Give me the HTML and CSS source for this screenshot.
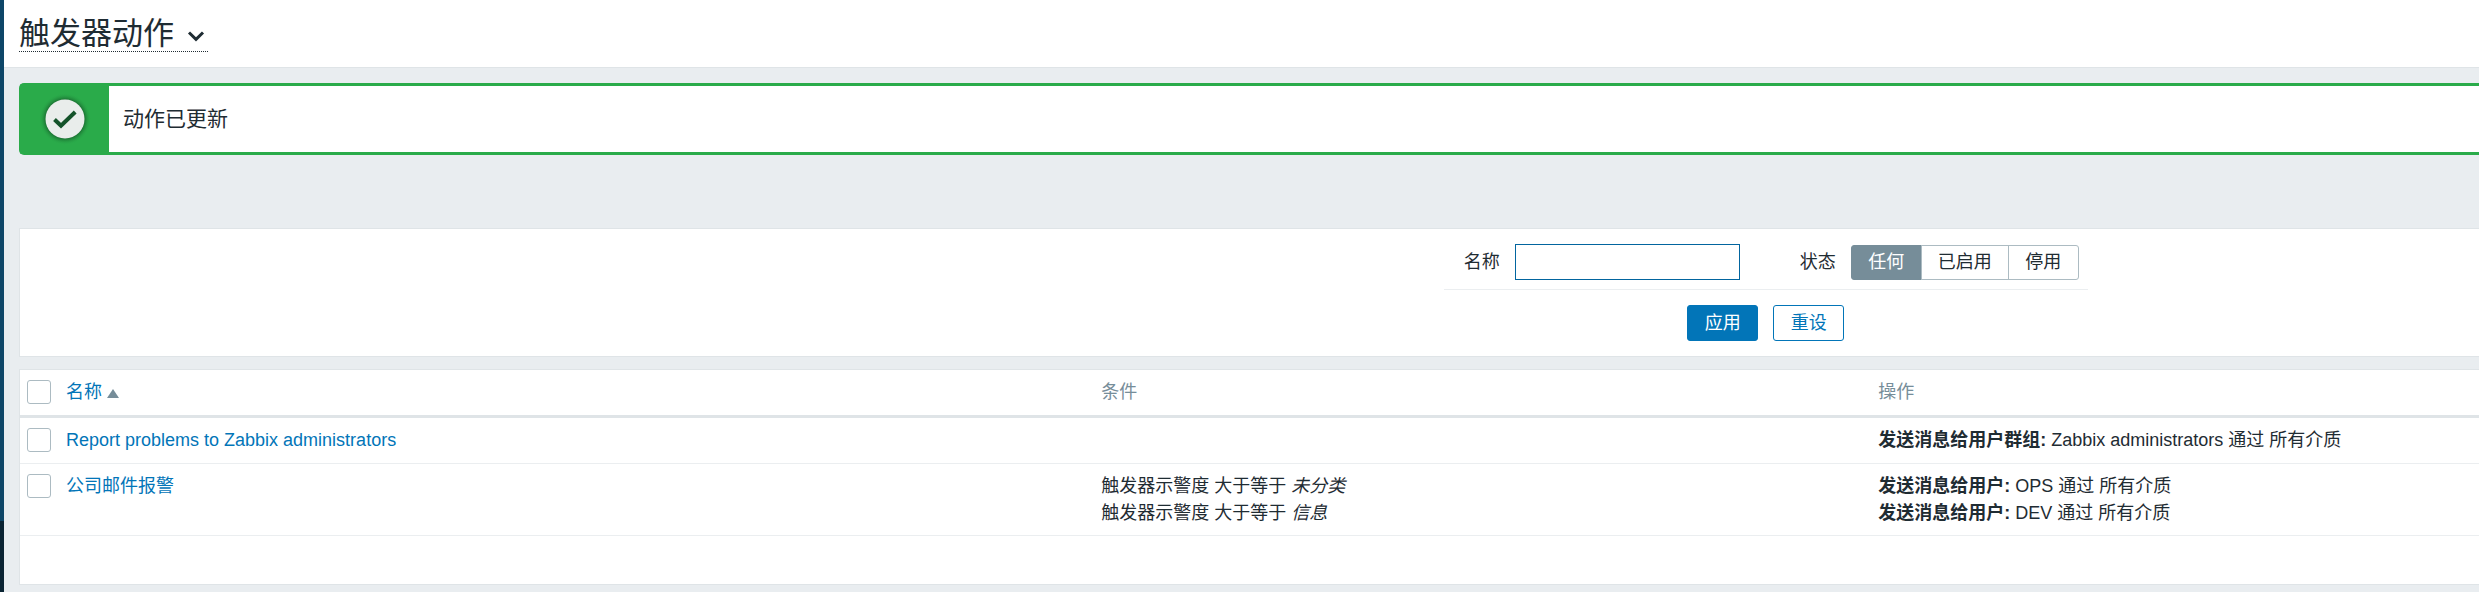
FILE: index.html
```html
<!DOCTYPE html>
<html lang="zh-CN">
<head>
<meta charset="utf-8">
<title>触发器动作</title>
<link rel="stylesheet" href="styles.css">
</head>
<body>
<div class="layout">
  <aside class="sidebar"><div class="sidebar-menu"></div><div class="sidebar-footer"></div></aside>
  <div class="page">
    <header class="page-header">
      <h1 class="page-title"><button type="button" class="title-button">触发器动作<svg class="chevron" width="18" height="12" viewBox="0 0 18 12" aria-hidden="true"><path d="M2 2.5 9 9.300 16 2.500" fill="none" stroke="#1f2c33" stroke-width="3"/></svg></button></h1>
    </header>
    <main class="content">
      <output class="message">
        <span class="message-icon">
          <svg width="60" height="60" viewBox="0 0 60 60" aria-hidden="true">
            <defs>
              <radialGradient id="halo"><stop offset="0.72" stop-color="#145a28" stop-opacity="0.85"/><stop offset="1" stop-color="#2aab4a" stop-opacity="0"/></radialGradient>
            </defs>
            <circle cx="30" cy="30" r="26" fill="url(#halo)"/>
            <circle cx="30" cy="30" r="19.500" fill="#e9edeb"/>
            <path d="M19.500 30.500 26 36.800 40.200 23" fill="none" stroke="#14532a" stroke-width="4"/>
          </svg>
        </span>
        <span class="message-text">动作已更新</span>
      </output>
      <form class="filter">
        <div class="filter-form">
          <div class="filter-fields">
            <div class="field">
              <label for="filter-name">名称</label>
              <input class="text-input" id="filter-name" type="text">
            </div>
            <div class="field" role="radiogroup" aria-labelledby="status-label">
              <span id="status-label">状态</span>
              <div class="segments">
                <label class="segment"><input type="radio" name="status" checked><span>任何</span></label>
                <label class="segment"><input type="radio" name="status"><span>已启用</span></label>
                <label class="segment"><input type="radio" name="status"><span>停用</span></label>
              </div>
            </div>
          </div>
          <div class="filter-buttons">
            <button type="submit" class="button button-primary">应用</button>
            <button type="reset" class="button">重设</button>
          </div>
        </div>
      </form>
      <div class="panel">
        <table class="actions">
          <thead>
            <tr>
              <th class="col-check"><input type="checkbox" class="check" aria-label="全选"></th>
              <th class="col-name"><a href="#">名称<span class="sort-arrow"></span></a></th>
              <th class="col-conditions">条件</th>
              <th>操作</th>
            </tr>
          </thead>
          <tbody>
            <tr>
              <td><input type="checkbox" class="check" aria-label="Report problems to Zabbix administrators"></td>
              <td><a href="#">Report problems to Zabbix administrators</a></td>
              <td></td>
              <td><b>发送消息给用户群组:</b> Zabbix administrators 通过 所有介质</td>
            </tr>
            <tr>
              <td><input type="checkbox" class="check" aria-label="公司邮件报警"></td>
              <td><a href="#">公司邮件报警</a></td>
              <td>触发器示警度 大于等于 <em>未分类</em><br>触发器示警度 大于等于 <em>信息</em></td>
              <td><b>发送消息给用户:</b> OPS 通过 所有介质<br><b>发送消息给用户:</b> DEV 通过 所有介质</td>
            </tr>
          </tbody>
        </table>
        <div class="table-footer"></div>
      </div>
    </main>
  </div>
</div>
</body>
</html>
```

FILE: styles.css
```css
* {
  box-sizing: border-box;
}

body {
  margin: 0;
  background: #e9edf0;
  color: #1f2c33;
  font: 400 18px/27px "Liberation Sans", "Noto Sans CJK SC", sans-serif;
}

a {
  color: #0275b8;
  text-decoration: none;
}

button,
input {
  margin: 0;
  font: inherit;
}

.layout {
  display: flex;
  min-height: 100vh;
}

.sidebar {
  display: flex;
  flex-direction: column;
  flex: none;
  width: 4px;
}

.sidebar-menu {
  flex: 1;
  background: #0e4668;
}

.sidebar-footer {
  height: 71px;
  background: #0a2433;
}

.page {
  flex: 1;
  min-width: 0;
}

.page-header {
  padding: 17px 15px 15px;
  background: #fff;
  border-bottom: 1px solid #dfe4e7;
}

.page-title {
  display: flex;
  margin: 0;
  font-size: 31px;
  font-weight: 400;
  line-height: 34px;
}

.title-button {
  display: flex;
  align-items: center;
  gap: 13px;
  padding: 0 3px 0 0;
  color: inherit;
  background: none;
  border: 0;
  border-bottom: 1px dotted #1f2c33;
}

.chevron {
  margin-top: 4px;
}

.content {
  padding: 15px 0 7px 15px;
}

.message {
  display: flex;
  min-height: 72px;
  margin-bottom: 73px;
  background: #fff;
  border: 3px solid #2aab4a;
  border-width: 3px 0 3px 3px;
  border-radius: 5px 0 0 5px;
  font-size: 21px;
}

.message-icon {
  display: flex;
  align-items: center;
  justify-content: center;
  width: 87px;
  padding-right: 2px;
  background: #2aab4a;
}

.message-text {
  align-self: center;
  padding: 0 0 2px 14px;
}

.filter {
  display: grid;
  grid-template-columns: 1423fr auto 391fr;
  margin-bottom: 12px;
  padding: 15px 0;
  background: #fff;
  border: 1px solid #dfe4e7;
  border-right: 0;
}

.filter-form {
  grid-column: 2;
}

.filter-fields {
  display: flex;
  gap: 60px;
  padding: 0 9px 9px 20px;
  border-bottom: 1px solid #ebeef0;
}

.field {
  display: flex;
  align-items: center;
  gap: 15px;
}

.text-input {
  width: 225px;
  height: 36px;
  padding: 0 8px;
  border: 1px solid #02659f;
}

.segments {
  display: flex;
}

.segment {
  position: relative;
}

.segment input {
  position: absolute;
  opacity: 0;
}

.segment span {
  display: block;
  min-width: 71px;
  height: 35px;
  margin-left: -1px;
  padding: 3px 16px;
  text-align: center;
  border: 1px solid #acbbc2;
}

.segment:first-child span {
  margin-left: 0;
  border-radius: 3px 0 0 3px;
}

.segment:last-child span {
  border-radius: 0 3px 3px 0;
}

.segment input:checked + span {
  color: #fff;
  background: #768d99;
  border-color: #768d99;
}

.filter-buttons {
  display: flex;
  justify-content: center;
  gap: 15px;
  padding-top: 15px;
}

.button {
  min-width: 71px;
  height: 36px;
  padding: 0 16px;
  color: #0275b8;
  background: #fff;
  border: 1px solid #0275b8;
  border-radius: 3px;
}

.button-primary {
  color: #fff;
  background: #0275b8;
}

.panel {
  background: #fff;
  border: 1px solid #dfe4e7;
  border-right: 0;
}

.actions {
  width: 100%;
  border-collapse: separate;
  border-spacing: 0;
  table-layout: fixed;
}

.actions th,
.actions td {
  padding: 9px 10px 8px;
  text-align: left;
  vertical-align: top;
  border-bottom: 1px solid #ebeef0;
}

.actions th {
  color: #768d99;
  font-weight: 400;
  border-bottom: 3px solid #dfe4e7;
}

.actions th:first-child,
.actions td:first-child {
  padding-left: 7px;
  padding-right: 0;
}

.actions .col-check {
  width: 36px;
}

.col-name {
  width: 42.100%;
}

.col-conditions {
  width: 31.600%;
}

.check {
  display: block;
  appearance: none;
  width: 24px;
  height: 24px;
  margin: 1px 0 3px;
  background: #fff;
  border: 1px solid #acbbc2;
  border-radius: 3px;
}

.sort-arrow {
  display: inline-block;
  margin-left: 5px;
  border: 6px solid transparent;
  border-top: 0;
  border-bottom: 9px solid #768d99;
}

.table-footer {
  height: 48px;
}

b {
  font-weight: 700;
}
```
